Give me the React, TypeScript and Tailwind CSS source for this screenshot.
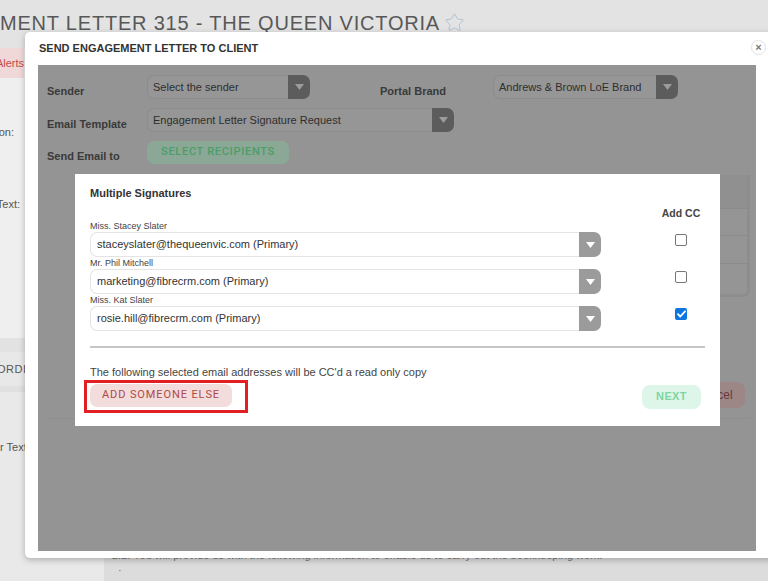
import { Star } from 'lucide-react';

const SANS = "font-['Liberation_Sans',Arial,sans-serif]";

function Caret({ color }: { color: string }) {
  return (
    <svg width="9" height="6" viewBox="0 0 9 6">
      <path d="M0 0h9L4.5 6z" fill={color} />
    </svg>
  );
}

// select as seen through the dark backdrop
function DimSelect({ text, className }: { text: string; className: string }) {
  return (
    <div className={`flex h-[24px] ${className}`}>
      <div className="flex flex-1 items-center rounded-l-[7px] border border-r-0 border-[#8c8c8c] bg-[#969696] pl-[5px] text-[11px] text-[#2e2e2e]">
        {text}
      </div>
      <div className="flex w-[22px] items-center justify-center rounded-r-[7px] bg-[#5c5c5c]">
        <Caret color="#9c9c9c" />
      </div>
    </div>
  );
}

function EmailSelect({ text }: { text: string }) {
  return (
    <div className="flex h-[25px] w-[511px]">
      <div className="flex flex-1 items-center rounded-l-[7px] border border-r-0 border-[#e4e4e4] bg-white pl-[6px] text-[11px] text-[#333]">
        {text}
      </div>
      <div className="flex w-[22px] items-center justify-center rounded-r-[7px] bg-[#9b9b9b]">
        <Caret color="#ffffff" />
      </div>
    </div>
  );
}

function Checkbox({ checked }: { checked?: boolean }) {
  if (checked) {
    return (
      <div className="flex h-[12px] w-[12px] items-center justify-center rounded-[2px] bg-[#0b75e0]">
        <svg width="9" height="8" viewBox="0 0 9 8">
          <path d="M1 4.2l2.3 2.3L8 1.3" fill="none" stroke="#fff" strokeWidth="1.8" strokeLinecap="round" strokeLinejoin="round" />
        </svg>
      </div>
    );
  }
  return <div className="h-[12px] w-[12px] rounded-[2px] border border-[#767676] bg-white" />;
}

const SIGNERS = [
  { name: 'Miss. Stacey Slater', email: 'staceyslater@thequeenvic.com (Primary)', cc: false },
  { name: 'Mr. Phil Mitchell', email: 'marketing@fibrecrm.com (Primary)', cc: false },
  { name: 'Miss. Kat Slater', email: 'rosie.hill@fibrecrm.com (Primary)', cc: true },
];

export default function App() {
  return (
    <div className={`relative h-[581px] w-[768px] overflow-hidden bg-[#e3e3e3] ${SANS}`}>
      {/* page behind the modals */}
      <div className="flex h-full flex-col">
        <div className="flex h-[40px] items-start pt-[11px]">
          <span className="text-[20px] leading-[24px] tracking-[0.8px] text-[#585858]">
            MENT LETTER 315 - THE QUEEN VICTORIA
          </span>
          <Star className="ml-[4px] mt-[1px] h-[21px] w-[21px] text-[#a9bccd]" strokeWidth={1} />
        </div>
        <div className="flex flex-1">
          <div className="flex w-[104px] flex-col bg-[#ececec] text-[11px] text-[#555]">
            <div className="h-[8px] bg-[#e3e3e3]" />
            <div className="flex h-[30px] w-[24px] items-center justify-end bg-[#f1d8d8] text-[#c04a4a]">
              <span className="whitespace-nowrap">Alerts</span>
            </div>
            <div className="flex h-[260px] flex-col bg-[#efefef]">
              <div className="mt-[46px] flex w-[14px] justify-end whitespace-nowrap">Description:</div>
              <div className="mt-[55px] flex w-[20px] justify-end whitespace-nowrap">Letter Text:</div>
            </div>
            <div className="h-[14px] bg-[#e2e2e2]" />
            <div className="flex h-[34px] items-center bg-[#e8e8e8]">
              <span className="ml-[-3px] whitespace-nowrap tracking-[0.5px]">ORDING</span>
            </div>
            <div className="h-[6px] bg-[#e0e0e0]" />
            <div className="flex flex-1 flex-col bg-[#e9e9e9]">
              <div className="mt-[47px] whitespace-nowrap">r Text:</div>
            </div>
          </div>
          <div className="flex flex-1 flex-col justify-end bg-[#dcdcdc] pb-[8px] pl-[8px] text-[11px] text-[#777]">
            <p className="whitespace-nowrap">2.2. You will provide us with the following information to enable us to carry out the bookkeeping work.</p>
            <p className="mt-[4px] pl-[6px] leading-[6px]">·</p>
          </div>
        </div>
      </div>

      {/* outer modal */}
      <div className="absolute left-[25px] top-[32px] flex h-[526px] w-[760px] flex-col rounded-[5px] bg-white shadow-[0_2px_6px_rgba(0,0,0,0.25)]">
        <div className="relative flex h-[33px] items-center pl-[14px]">
          <h2 className="text-[11px] font-bold text-[#333]">SEND ENGAGEMENT LETTER TO CLIENT</h2>
          <div className="absolute left-[726px] top-[8px] flex h-[15px] w-[15px] items-center justify-center rounded-full border border-[#e2e2e2] text-[11px] font-bold leading-none text-[#777]">
            ×
          </div>
        </div>
        <div className="ml-[13px] flex h-[486px] w-[718px] flex-col bg-[#939493] pl-[9px] pr-[6px] pt-[10px]">
          <div className="flex items-end">
            <span className="w-[100px] text-[11px] font-bold text-[#3a3a3a]">Sender</span>
            <DimSelect text="Select the sender" className="w-[163px]" />
            <span className="ml-[70px] w-[113px] text-[11px] font-bold text-[#3a3a3a]">Portal Brand</span>
            <DimSelect text="Andrews & Brown LoE Brand" className="w-[185px]" />
          </div>
          <div className="mt-[9px] flex items-end">
            <span className="w-[100px] text-[11px] font-bold text-[#3a3a3a]">Email Template</span>
            <DimSelect text="Engagement Letter Signature Request" className="w-[307px]" />
          </div>
          <div className="mt-[9px] flex items-end">
            <span className="w-[100px] text-[11px] font-bold text-[#3a3a3a]">Send Email to</span>
            <div className="flex h-[23px] w-[142px] items-center justify-center rounded-[7px] bg-[#8ba795] font-['Roboto',sans-serif] text-[11px] font-medium tracking-[0.7px] text-[#4b9e69]">
              SELECT RECIPIENTS
            </div>
          </div>
          <div className="ml-[40px] mt-[11px] flex h-[122px] flex-col rounded-b-[7px] border-r-[3px] border-b-[3px] border-[#8d8d8d] bg-[#959595]">
            <div className="h-[33px] bg-[#909090]" />
            <div className="h-[27px] border-t border-[#8a8a8a]" />
            <div className="h-[28px] border-t border-[#8a8a8a]" />
            <div className="flex-1 border-t border-[#8a8a8a]" />
          </div>
          <div className="mr-[5px] mt-[85px] flex justify-end">
            <div className="flex h-[26px] w-[62px] items-center justify-center rounded-[8px] bg-[#9c8686] text-[12px] text-[#6c3838]">
              Cancel
            </div>
          </div>
          <div className="mt-[10px] border-t border-[#8e8e8e]" />
        </div>
      </div>

      {/* multiple signatures modal */}
      <div className="absolute left-[75px] top-[174px] flex w-[645px] flex-col bg-white px-[15px] pb-[13px] pt-[12px]">
        <h3 className="text-[11px] font-bold leading-[14px] text-[#333]">Multiple Signatures</h3>
        <div className="mt-[6px] flex justify-end">
          <span className="w-[48px] text-center text-[10.5px] font-bold leading-[14px] text-[#444]">Add CC</span>
        </div>
        {SIGNERS.map((s) => (
          <div key={s.name} className="flex">
            <div className="flex flex-col">
              <span className="h-[12px] text-[9px] leading-[12px] text-[#444]">{s.name}</span>
              <EmailSelect text={s.email} />
            </div>
            <div className="ml-auto flex w-[48px] justify-center pt-[14px]">
              <Checkbox checked={s.cc} />
            </div>
          </div>
        ))}
        <div className="mt-[15px] h-[2px] bg-[#c6c6c6]" />
        <p className="mt-[17px] text-[11px] leading-[14px] text-[#444]">
          The following selected email addresses will be CC'd a read only copy
        </p>
        <div className="mt-[1px] flex items-center justify-between">
          <div className="-ml-[6px] border-[3px] border-[#e31f26] pb-[3px] pl-[3px] pr-[13px] pt-[1px]">
            <div className="flex h-[23px] w-[142px] items-center justify-center rounded-[7px] bg-[#f2dcdc] font-['Roboto',sans-serif] text-[11px] tracking-[0.9px] text-[#b04848]">
              ADD SOMEONE ELSE
            </div>
          </div>
          <div className="mr-[4px] flex h-[24px] w-[59px] items-center justify-center rounded-[8px] bg-[#def6e9] text-[11px] font-bold tracking-[0.4px] text-[#7fd5a2]">
            NEXT
          </div>
        </div>
      </div>
    </div>
  );
}
